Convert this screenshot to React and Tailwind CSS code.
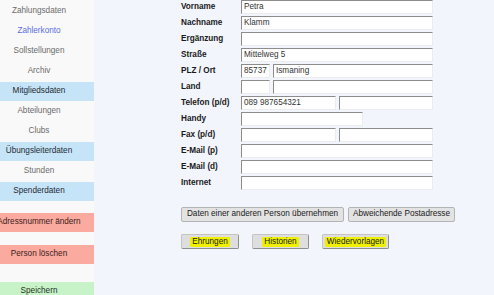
import React from "react";

const font = { fontFamily: '"Liberation Sans", Arial, sans-serif' };

function SideItem({ label, kind }) {
  const styles = {
    plain: "text-[#6b6b6b]",
    link: "text-[#5a6ee0]",
    blue: "bg-[#c6e4f7] text-[#1f2a33]",
    red: "bg-[#fbaaa0] text-[#3a1d1a]",
    green: "bg-[#c8f2c8] text-[#1f331f]",
  };
  return (
    <div className="h-[20px] flex flex-col justify-end shrink-0">
      <div className={`h-[19px] flex items-center justify-center whitespace-nowrap text-[8.2px] ${styles[kind]}`}>
        {label}
      </div>
    </div>
  );
}

function Input({ w, value }) {
  return (
    <div
      className={`h-[14px] ${w} bg-white border-t border-l border-[#8c8c8c] border-r border-b border-r-[#ececec] border-b-[#ececec] flex items-center pl-[2px] text-[8.2px] text-[#333] whitespace-nowrap overflow-hidden`}
    >
      {value}
    </div>
  );
}

function Row({ label, children }) {
  return (
    <div className="h-[16px] flex items-start">
      <div className="w-[60px] h-[14px] flex items-center text-[8.2px] font-bold text-[#1a1a1a] whitespace-nowrap">
        {label}
      </div>
      <div className="flex gap-[3px]">{children}</div>
    </div>
  );
}

function HiButton({ w, label }) {
  return (
    <div
      className={`${w} h-[15px] bg-[#dedede] border border-[#c4c4c4] border-r-[#8e8e8e] border-b-[#8e8e8e] rounded-[2px] flex items-center justify-center text-[8.2px] text-[#1a1a1a]`}
    >
      <span className="bg-[#eef000] px-[2px] leading-[10px] rounded-[1px]">{label}</span>
    </div>
  );
}

export default function App() {
  return (
    <div style={font} className="w-[494px] h-[295px] overflow-hidden flex bg-[#f3f5fc]">
      <div className="w-[94px] h-full overflow-hidden bg-[#f9f9f9] shrink-0">
        <div className="ml-[-16px] w-[110px] flex flex-col pt-[1px]">
          <SideItem label="Zahlungsdaten" kind="plain" />
          <SideItem label="Zahlerkonto" kind="link" />
          <SideItem label="Sollstellungen" kind="plain" />
          <SideItem label="Archiv" kind="plain" />
          <SideItem label="Mitgliedsdaten" kind="blue" />
          <SideItem label="Abteilungen" kind="plain" />
          <SideItem label="Clubs" kind="plain" />
          <SideItem label="Übungsleiterdaten" kind="blue" />
          <SideItem label="Stunden" kind="plain" />
          <SideItem label="Spenderdaten" kind="blue" />
          <div className="h-[11px] shrink-0" />
          <SideItem label="Adressnummer ändern" kind="red" />
          <div className="h-[12px] shrink-0" />
          <SideItem label="Person löschen" kind="red" />
          <div className="h-[17px] shrink-0" />
          <SideItem label="Speichern" kind="green" />
        </div>
      </div>
      <div className="flex-1 pl-[87px] flex flex-col">
        <Row label="Vorname"><Input w="w-[192px]" value="Petra" /></Row>
        <Row label="Nachname"><Input w="w-[192px]" value="Klamm" /></Row>
        <Row label="Ergänzung"><Input w="w-[192px]" value="" /></Row>
        <Row label="Straße"><Input w="w-[192px]" value="Mittelweg 5" /></Row>
        <Row label="PLZ / Ort">
          <Input w="w-[29px]" value="85737" />
          <Input w="w-[160px]" value="Ismaning" />
        </Row>
        <Row label="Land">
          <Input w="w-[29px]" value="" />
          <Input w="w-[160px]" value="" />
        </Row>
        <Row label="Telefon (p/d)">
          <Input w="w-[95px]" value="089 987654321" />
          <Input w="w-[94px]" value="" />
        </Row>
        <Row label="Handy"><Input w="w-[122px]" value="" /></Row>
        <Row label="Fax (p/d)">
          <Input w="w-[95px]" value="" />
          <Input w="w-[94px]" value="" />
        </Row>
        <Row label="E-Mail (p)"><Input w="w-[192px]" value="" /></Row>
        <Row label="E-Mail (d)"><Input w="w-[192px]" value="" /></Row>
        <Row label="Internet"><Input w="w-[192px]" value="" /></Row>

        <div className="mt-[15px] flex gap-[4px]">
          <div className="w-[163px] h-[15px] bg-[#e3e3e3] border border-[#b4b4b4] rounded-[2px] flex items-center justify-center text-[8.2px] text-[#1a1a1a] whitespace-nowrap">
            Daten einer anderen Person übernehmen
          </div>
          <div className="w-[107px] h-[15px] bg-[#e3e3e3] border border-[#b4b4b4] rounded-[2px] flex items-center justify-center text-[8.2px] text-[#1a1a1a] whitespace-nowrap">
            Abweichende Postadresse
          </div>
        </div>
        <div className="mt-[12px] flex gap-[13px]">
          <HiButton w="w-[58px]" label="Ehrungen" />
          <HiButton w="w-[57px]" label="Historien" />
          <HiButton w="w-[67px]" label="Wiedervorlagen" />
        </div>
      </div>
    </div>
  );
}
